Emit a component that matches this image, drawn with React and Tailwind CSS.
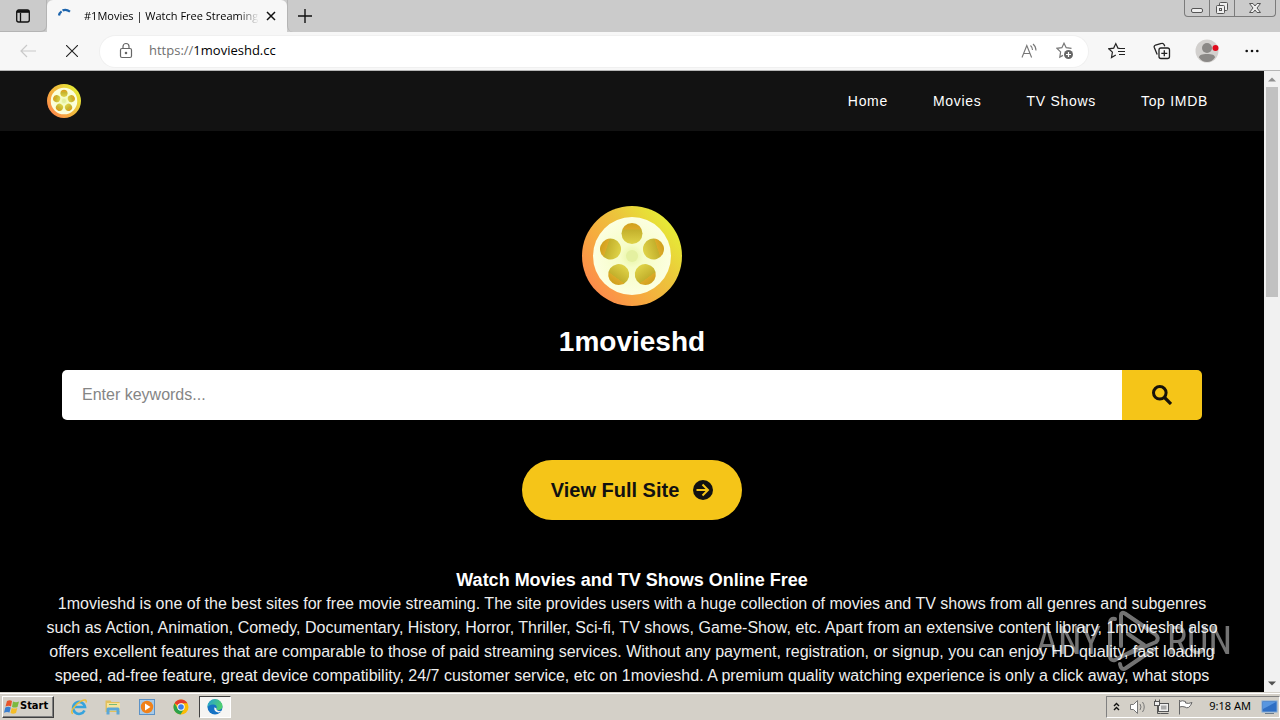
import React from "react";

const UI = "font-['Open_Sans','Noto_Sans',sans-serif]";

function ReelLogo({ className, id }) {
  const holes = [
    [50, 27.5, 0],
    [71.5, 43, 72],
    [63.3, 68.5, 144],
    [36.7, 68.5, 216],
    [28.5, 43, 288],
  ];
  return (
    <svg viewBox="0 0 100 100" className={className} aria-hidden="true">
      <defs>
        <linearGradient id={id + "ring"} x1="0.1" y1="0.85" x2="0.9" y2="0.2">
          <stop offset="0" stopColor="#fd8a4c" />
          <stop offset="0.35" stopColor="#f6ab3e" />
          <stop offset="0.65" stopColor="#ecc43c" />
          <stop offset="1" stopColor="#e6ea36" />
        </linearGradient>
        <radialGradient id={id + "disc"}>
          <stop offset="0" stopColor="#e6f3a0" />
          <stop offset="0.3" stopColor="#f6fdc8" />
          <stop offset="1" stopColor="#fcffe0" />
        </radialGradient>
        <linearGradient id={id + "hole"} x1="0" y1="0" x2="0" y2="1">
          <stop offset="0" stopColor="#d0a01c" />
          <stop offset="0.3" stopColor="#dcaa28" />
          <stop offset="0.32" stopColor="#c3b02c" />
          <stop offset="1" stopColor="#dfd348" />
        </linearGradient>
      </defs>
      <circle cx="50" cy="50" r="50" fill={`url(#${id}ring)`} />
      <circle cx="50" cy="50" r="39" fill={`url(#${id}disc)`} />
      {holes.map(([x, y, a]) => (
        <circle key={a} cx={x} cy={y} r="10.5" fill={`url(#${id}hole)`} transform={`rotate(${a} ${x} ${y})`} />
      ))}
      <circle cx="50" cy="50" r="6" fill="#e4f0a0" />
    </svg>
  );
}

function TabStrip() {
  return (
    <div className="flex h-8 shrink-0 items-start bg-[#cbcbcb]">
      <button aria-label="Tab actions" className="flex h-8 w-[47px] items-center justify-center rounded-br-md border-b border-r border-[#b4b4b4]">
        <svg width="16" height="16" viewBox="0 0 16 16" fill="none" stroke="#111" strokeWidth="1.3">
          <rect x="1.7" y="2" width="12.6" height="12" rx="2" />
          <path d="M2 4h12M5.5 5v9" />
          <path d="M2 3.2h12" strokeWidth="2" />
        </svg>
      </button>
      <div className="flex h-8 w-60 items-center rounded-t-md bg-[#f7f7f7] pl-[10px] pr-1">
        <svg width="16" height="16" viewBox="0 0 16 16" className="shrink-0" fill="none" stroke="#1c64ad" strokeWidth="2.2">
          <path d="M2 7.5a6 6 0 0 1 2.600-4.200" />
          <path d="M5.500 2.500Q9 .6 13 3.600" />
        </svg>
        <span className={UI + " ml-[11px] min-w-0 flex-1 whitespace-nowrap text-[11px] text-black [mask-image:linear-gradient(to_right,black_88%,transparent)]"}>
          #1Movies | Watch Free Streaming
        </span>
        <button aria-label="Close tab" className="flex size-6 shrink-0 items-center justify-center">
          <svg width="10" height="10" viewBox="0 0 10 10" stroke="#111" strokeWidth="1.5"><path d="M1 1l8 8M9 1L1 9" /></svg>
        </button>
      </div>
      <button aria-label="New tab" className="flex h-8 w-[34px] items-center justify-center rounded-bl-md border-l border-[#b4b4b4]">
        <svg width="14" height="14" viewBox="0 0 14 14" stroke="#111" strokeWidth="1.4"><path d="M7 0v14M0 7h14" /></svg>
      </button>
      <div className="flex-1" />
      <div className="mr-1 flex h-[17px] overflow-hidden rounded-b border border-t-0 border-[#7b7b7b]">
        <button aria-label="Minimize" className="flex w-6 items-center justify-center">
          <svg width="14" height="16" viewBox="0 0 14 16"><rect x="1.5" y="8.5" width="11" height="4" rx="1.5" fill="#eee" stroke="#555" /></svg>
        </button>
        <button aria-label="Restore" className="flex w-[26px] items-center justify-center border-x border-[#7b7b7b]">
          <svg width="14" height="14" viewBox="0 0 14 14" fill="#eee" stroke="#555">
            <rect x="4.5" y="1.5" width="8" height="8" rx="1" />
            <rect x="1.5" y="4.5" width="8" height="8" rx="1" />
            <rect x="4.5" y="7.5" width="2" height="2" />
          </svg>
        </button>
        <button aria-label="Close" className="flex w-10 items-center justify-center">
          <svg width="14" height="12" viewBox="0 0 14 12" fill="#eee" stroke="#555">
            <path d="M1.5 1.5h3.5l2 2.5 2-2.5h3.5L9 6l3.5 4.5H9L7 8l-2 2.5H1.5L5 6z" />
          </svg>
        </button>
      </div>
    </div>
  );
}

function ToolButton({ label, children }) {
  return <button aria-label={label} className="flex h-8 w-[45px] items-center justify-center">{children}</button>;
}

function Toolbar() {
  return (
    <div className="flex h-[39px] shrink-0 items-center border-b border-[#b5b5b5] bg-[#f7f7f7] px-[6px]">
      <button aria-label="Back" className="flex h-8 w-11 items-center justify-center">
        <svg width="16" height="14" viewBox="0 0 16 14" fill="none" stroke="#c9c9c9" strokeWidth="1.2"><path d="M16 7H1M7 1L1 7l6 6" /></svg>
      </button>
      <button aria-label="Stop loading" className="flex h-8 w-11 items-center justify-center">
        <svg width="12" height="12" viewBox="0 0 12 12" stroke="#222" strokeWidth="1.1"><path d="M0 0l12 12M12 0L0 12" /></svg>
      </button>
      <div className="mx-[6px] flex h-[31px] flex-1 items-center rounded-full bg-white pl-[18px] pr-[14px] ring-1 ring-[#f0f0f0]">
        <svg width="16" height="18" viewBox="0 0 16 18" fill="none" stroke="#666" strokeWidth="1.2">
          <rect x="2.5" y="6.5" width="11" height="9" rx="1.5" />
          <path d="M5 6.5V4.500a3 3 0 0 1 6 0v2" />
          <circle cx="8" cy="11" r=".7" fill="#666" />
        </svg>
        <div className={UI + " ml-[15px] flex-1 text-[13px] text-black"}><span className="text-[#707070]">https://</span>1movieshd.cc</div>
        <button aria-label="Read aloud" className="flex w-[18px] items-center justify-center">
          <svg width="17" height="16" viewBox="0 0 17 16" fill="none" stroke="#777" strokeWidth="1.1">
            <path d="M1 14.500L5.800 2.500l4.800 12M2.600 10.500H9" />
            <path d="M9.500 2.500q2 1.800 2 4.500M12 1q3 2.500 3 6.500" />
          </svg>
        </button>
        <button aria-label="Add to favorites" className="ml-[18px] flex w-[18px] items-center justify-center">
          <svg width="18" height="18" viewBox="0 0 18 18" fill="none" stroke="#777" strokeWidth="1.2" className="shrink-0">
            <path d="M15.500 6.400l-5.300-.7L8 1.200 5.900 5.700 1 6.300l3.600 3.600-.8 5.200 3.200-1.700" />
            <circle cx="12.500" cy="12.500" r="4.500" fill="#666" stroke="none" />
            <path d="M12.500 10v5M10 12.500h5" stroke="white" />
          </svg>
        </button>
      </div>
      <ToolButton label="Favorites">
        <svg width="18" height="18" viewBox="0 0 18 18" fill="none" stroke="#222" strokeWidth="1.2">
          <path d="M11.500 6.300l-1.600-.2L7.800 1.600 5.700 6.100l-4.900.7 3.600 3.300-.9 5.400 4.300-2.500" />
          <path d="M11 6.500h6M10 9.500h7M11 12.500h6" />
        </svg>
      </ToolButton>
      <ToolButton label="Collections">
        <svg width="18" height="18" viewBox="0 0 18 18" fill="none" stroke="#222" strokeWidth="1.3">
          <rect x="6" y="6" width="10.500" height="10.500" rx="2" />
          <path d="M11.300 8.200v6M8.300 11.300h6M4.200 12.500L1.300 5.500A2 2 0 0 1 2.500 3l6-1.500A2 2 0 0 1 11 2.500l.8 1.800" />
        </svg>
      </ToolButton>
      <ToolButton label="Profile">
        <svg width="24" height="24" viewBox="0 0 24 24">
          <circle cx="12" cy="12" r="11.500" fill="#d2d0ce" />
          <circle cx="12" cy="9" r="5" fill="#8a8886" />
          <path d="M4 18.500c0-2.500 3-3.500 8-3.500s8 1 8 3.500c-2 3-5 4.500-8 4.500s-6-1.500-8-4.500z" fill="#8a8886" />
          <circle cx="20.500" cy="9" r="3" fill="#e00b1c" />
        </svg>
      </ToolButton>
      <ToolButton label="Settings and more">
        <svg width="14" height="4" viewBox="0 0 14 4" fill="#111"><circle cx="1.700" cy="2" r="1.300" /><circle cx="7" cy="2" r="1.300" /><circle cx="12.300" cy="2" r="1.300" /></svg>
      </ToolButton>
    </div>
  );
}

function Site() {
  return (
    <div className="min-w-0 flex-1 overflow-hidden bg-black font-['Liberation_Sans',Arial,sans-serif] text-white">
      <header className="flex h-[60px] items-center justify-between bg-[#121212] pl-[47px] pr-14">
        <a href="#home" aria-label="1movieshd"><ReelLogo id="small" className="size-[34px]" /></a>
        <nav className="flex gap-[45px] text-sm tracking-wider">
          <a href="#home">Home</a>
          <a href="#movies">Movies</a>
          <a href="#tv">TV Shows</a>
          <a href="#top">Top IMDB</a>
        </nav>
      </header>
      <main className="flex flex-col items-center px-[42px] pt-[75px] text-center">
        <ReelLogo id="large" className="size-[100px]" />
        <h1 className="mt-[18px] text-[28px] leading-9 font-bold">1movieshd</h1>
        <form className="mt-[10px] flex h-[50px] w-full max-w-[1140px] overflow-hidden rounded-[5px]" onSubmit={(e) => e.preventDefault()}>
          <input aria-label="Search keywords" placeholder="Enter keywords..." className="min-w-0 flex-1 bg-white px-5 text-base text-black outline-none placeholder:text-[#858585]" />
          <button aria-label="Search" className="flex w-20 items-center justify-center bg-[#f5c518]">
            <svg width="20" height="20" viewBox="0 0 20 20" fill="none" stroke="#16120a" strokeWidth="3">
              <circle cx="7.800" cy="7.800" r="6.300" />
              <path d="M12 12l7 7" strokeWidth="3.200" />
            </svg>
          </button>
        </form>
        <a href="#full" className="mt-10 flex h-[60px] items-center rounded-full bg-[#f5c518] px-[29px] text-xl font-bold text-[#111]">
          View Full Site
          <svg width="20" height="20" viewBox="0 0 20 20" fill="none" className="ml-[14px]">
            <circle cx="10" cy="10" r="10" fill="#111" />
            <path d="M3.500 10h11.500M9.500 4.500l5.500 5.500-5.500 5.500" stroke="#f5c518" strokeWidth="2" />
          </svg>
        </a>
        <h2 className="mt-12 text-lg leading-6 font-bold">Watch Movies and TV Shows Online Free</h2>
        <p className="w-full max-w-[1180px] text-base leading-6 text-[#eee]">
          1movieshd is one of the best sites for free movie streaming. The site provides users with a huge collection of movies and TV shows from all genres and subgenres such as Action, Animation, Comedy, Documentary, History, Horror, Thriller, Sci-fi, TV shows, Game-Show, etc. Apart from an extensive content library, 1movieshd also offers excellent features that are comparable to those of paid streaming services. Without any payment, registration, or signup, you can enjoy HD quality, fast loading speed, ad-free feature, great device compatibility, 24/7 customer service, etc on 1movieshd. A premium quality watching experience is only a click away, what stops
        </p>
      </main>
    </div>
  );
}

function Scrollbar() {
  return (
    <div className="flex w-4 shrink-0 flex-col items-center bg-[#f1f1f1]" aria-hidden="true">
      <svg width="16" height="16" viewBox="0 0 16 16"><path d="M4 10.500h8L8 6.500z" fill="#8f8f8f" /></svg>
      <div className="h-[210px] w-3 bg-[#c1c1c1]" />
      <div className="flex-1" />
      <svg width="16" height="16" viewBox="0 0 16 16"><path d="M4 5.500h8L8 9.500z" fill="#505050" /></svg>
    </div>
  );
}

function Watermark() {
  return (
    <div className="pointer-events-none absolute right-12 bottom-5 flex h-[62px] items-center font-['Roboto_Condensed','Liberation_Sans_Narrow',sans-serif] text-[38px] leading-none text-white opacity-45">
      <span>ANY</span>
      <svg width="54" height="62" viewBox="0 0 54 62" fill="none" stroke="white" strokeWidth="4" strokeLinejoin="round" strokeLinecap="round" className="mx-[6px]">
        <path d="M14 36V5.500q0-4 4-2L48 24q5 4 1 8L21 44" />
        <path d="M8 9q-5-1-5 4v33q0 5 5 4l29-15L21 24" />
        <path d="M13 54q1 7 6 4l28-19" />
      </svg>
      <span>RUN</span>
    </div>
  );
}

function Taskbar() {
  return (
    <footer className="flex h-7 shrink-0 items-center border-t border-[#d4d0c8] bg-[#d4d0c8] pl-[2px] text-black shadow-[inset_0_1px_0_white]">
      <button className="flex h-[22px] w-[52px] items-center border border-t-white border-r-[#404040] border-b-[#404040] border-l-white pl-px font-['DejaVu_Sans_Condensed','DejaVu_Sans',sans-serif] text-[11px] font-bold shadow-[inset_-1px_-1px_0_#808080]">
        <svg width="16" height="16" viewBox="0 0 16 16" className="shrink-0">
          <path d="M3 2q3-1.500 5 0L7 7.500Q5 6 1.500 7.500z" fill="#e8552b" />
          <path d="M9 2.500q3 1.300 6 0L13.500 8q-3 1.200-5.500 0z" fill="#7cb93e" />
          <path d="M1.300 8.500q3-1.400 5.500 0L5.500 13.500Q3 12.200 0 13.700z" fill="#3a7fd0" />
          <path d="M7.700 9q3 1.200 5.600 0L12 14q-3 1.500-5.500 0z" fill="#f5bd27" />
        </svg>
        Start
      </button>
      <div className="ml-2 flex items-center">
        <button aria-label="Internet Explorer" className="flex h-[22px] w-[34px] items-center justify-center">
          <svg width="18" height="18" viewBox="0 0 18 18" fill="none">
            <path d="M14.500 12.500A6 6 0 1 1 15 9H5" stroke="#36a3dd" strokeWidth="2.600" />
            <path d="M3 15.500C-1 15 5 6 11 3.200c4-2 6-1.500 5 1.300" stroke="#edbd35" strokeWidth="1.400" />
          </svg>
        </button>
        <button aria-label="File Explorer" className="flex h-[22px] w-[34px] items-center justify-center">
          <svg width="18" height="18" viewBox="0 0 18 18">
            <path d="M1.500 2.500h5l1 1.500h8V14h-14z" fill="#e3c05c" />
            <path d="M3 5h13v8H3z" fill="#f6e39a" />
            <path d="M2.500 16.500V11q0-1.500 1.500-1.500h10q1.500 0 1.500 1.500v5.500H12.500v-4h-7v4z" fill="#5ba7d8" />
            <path d="M5 6.500h8" stroke="#76b97a" />
          </svg>
        </button>
        <button aria-label="Media Player" className="flex h-[22px] w-[34px] items-center justify-center">
          <svg width="16" height="16" viewBox="0 0 16 16">
            <rect x=".5" y=".5" width="15" height="15" fill="#a7cae8" stroke="#5c92c6" />
            <circle cx="8" cy="8" r="6.200" fill="#f08119" />
            <path d="M6 4.500L11.500 8 6 11.500z" fill="white" />
          </svg>
        </button>
        <button aria-label="Chrome" className="flex h-[22px] w-[34px] items-center justify-center">
          <svg width="16" height="16" viewBox="0 0 16 16">
            <circle cx="8" cy="8" r="7.500" fill="#fbbc05" />
            <path d="M8 8L1.500 4.200A7.500 7.500 0 0 1 14.500 4.300H8z" fill="#e33b2e" />
            <path d="M1.500 4.200A7.500 7.500 0 0 0 7.500 15.500L11.200 9.800 8 8 5 10z" fill="#2ba24c" />
            <circle cx="8" cy="8" r="3.700" fill="white" />
            <circle cx="8" cy="8" r="2.800" fill="#3b7de9" />
          </svg>
        </button>
        <button aria-label="Microsoft Edge" className="ml-px flex h-[22px] w-8 items-center justify-center border border-t-[#404040] border-r-white border-b-white border-l-[#404040] bg-[#f6f5f3]">
          <svg width="16" height="16" viewBox="0 0 16 16">
            <defs>
              <linearGradient id="edgeTop" x1="0" y1="0" x2="1" y2=".4"><stop stopColor="#249ed8" /><stop offset="1" stopColor="#4fcf70" /></linearGradient>
            </defs>
            <circle cx="8" cy="8" r="7.500" fill="#1672c4" />
            <path d="M.5 7.500A7.500 7.500 0 0 1 15.500 7.500c0 2.300-2 3.500-4 3.500-1.500 0-2.500-.7-2-1.500C10.500 7 8.500 5.500 6 5.500 3 5.500 1 7 .5 9z" fill="url(#edgeTop)" />
            <path d="M7.500 8.200c-1 3 1.500 5 4 5.200 1.500 0 2.500-.5 3.700-1.400-3 .6-6-.2-5.800-2.500z" fill="#f6f5f3" />
          </svg>
        </button>
      </div>
      <div className="ml-auto flex h-[22px] items-center border border-t-[#808080] border-r-white border-b-white border-l-[#808080] pr-px pl-1">
        <button aria-label="Show hidden icons" className="flex w-[10px] justify-center">
          <svg width="7" height="9" viewBox="0 0 7 9" fill="none" stroke="#111" strokeWidth="1.400"><path d="M1 4l2.500-2.500L6 4M1 8l2.500-2.500L6 8" /></svg>
        </button>
        <svg width="18" height="16" viewBox="0 0 18 16" fill="white" stroke="#777" className="ml-2">
          <path d="M1.500 5.500h3l4-4v13l-4-4h-3z" />
          <path d="M11 5q2 3 0 6M13.500 3q3.500 5 0 10" fill="none" />
        </svg>
        <svg width="18" height="16" viewBox="0 0 18 16" fill="#eee" stroke="#555" className="ml-[6px]">
          <rect x="5.500" y="4.500" width="10" height="8" />
          <path d="M7.500 14.500h8M2.500 .5v3h4v-3M4.500 6.500v8h3" fill="none" />
          <rect x="1.500" y="2.500" width="5" height="4" />
          <rect x="8" y="6.500" width="5.500" height="4" fill="#aaa" stroke="none" />
        </svg>
        <svg width="18" height="16" viewBox="0 0 18 16" fill="white" stroke="#666" className="ml-[6px]">
          <path d="M2.500 1v14.500" />
          <path d="M2.500 2.500q3-1.500 6 0v1.500q3 1 6.500-.5-1 3-3.500 5-2 .8-3.500-.5-3-1-5.500 0z" />
        </svg>
        <time className="ml-[14px] font-['Noto_Sans',sans-serif] text-[11px]">9:18 AM</time>
        <button aria-label="Show desktop" className="ml-[10px]">
          <svg width="17" height="16" viewBox="0 0 17 16">
            <rect x="1" y="2" width="15" height="11" fill="#2f6fc4" stroke="#7fa9d8" />
            <path d="M2 3h13L2 10z" fill="#5796e0" />
            <path d="M4 14.500h9" stroke="#6b7c8c" />
          </svg>
        </button>
      </div>
    </footer>
  );
}

export default function App() {
  return (
    <div className="flex h-screen flex-col overflow-hidden">
      <TabStrip />
      <Toolbar />
      <div className="flex min-h-0 flex-1">
        <Site />
        <Scrollbar />
      </div>
      <div className="relative">
        <Watermark />
      </div>
      <Taskbar />
    </div>
  );
}
